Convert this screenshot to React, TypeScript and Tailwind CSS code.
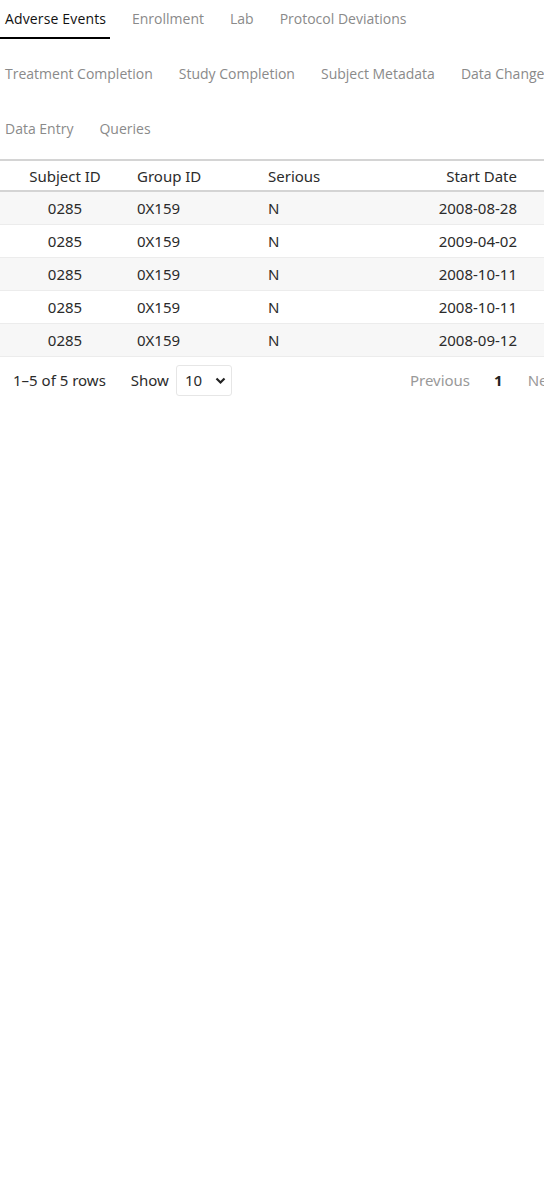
import React from 'react'

const tabRows = [
  ['Adverse Events', 'Enrollment', 'Lab', 'Protocol Deviations'],
  ['Treatment Completion', 'Study Completion', 'Subject Metadata', 'Data Changes'],
  ['Data Entry', 'Queries'],
]

const rows = [
  { subject: '0285', group: '0X159', serious: 'N', start: '2008-08-28' },
  { subject: '0285', group: '0X159', serious: 'N', start: '2009-04-02' },
  { subject: '0285', group: '0X159', serious: 'N', start: '2008-10-11' },
  { subject: '0285', group: '0X159', serious: 'N', start: '2008-10-11' },
  { subject: '0285', group: '0X159', serious: 'N', start: '2008-09-12' },
]

export default function App() {
  return (
    <div className="w-[544px] h-[1202px] overflow-hidden bg-white font-['Open_Sans',sans-serif]">
      {/* Tabs */}
      <div className="flex flex-col gap-4">
        {tabRows.map((row, ri) => (
          <div key={ri} className="flex gap-4 whitespace-nowrap">
            {row.map((t) => {
              const active = t === 'Adverse Events'
              return (
                <div
                  key={t}
                  className={
                    active
                      ? 'h-[39px] w-[110px] mr-[1px] px-[5px] flex items-center text-[14px] tracking-[0.15px] text-[#111] border-b-2 border-black'
                      : 'h-[39px] px-[5px] flex items-center text-[14px] text-[#8a8a8a] border-b-2 border-transparent'
                  }
                >
                  {t}
                </div>
              )
            })}
          </div>
        ))}
      </div>

      {/* Table */}
      <div className="mt-[10px] w-[620px] text-[15px] text-[#2b2b2b] font-['Noto_Sans',sans-serif]">
        <div className="flex h-[33px] pt-[1px] items-center border-t-2 border-b-2 border-[#d4d4d4]">
          <div className="w-[130px] text-center">Subject ID</div>
          <div className="w-[131px] px-[7px]">Group ID</div>
          <div className="w-[131px] px-[7px]">Serious</div>
          <div className="w-[132px] px-[7px] text-right">Start Date</div>
        </div>
        {rows.map((r, i) => (
          <div
            key={i}
            className={
              i % 2 === 0
                ? 'flex h-[33px] items-center bg-[#f7f7f7] border-b border-[#ececec]'
                : 'flex h-[33px] items-center bg-white border-b border-[#ececec]'
            }
          >
            <div className="w-[130px] text-center">{r.subject}</div>
            <div className="w-[131px] px-[7px]">{r.group}</div>
            <div className="w-[131px] px-[7px]">{r.serious}</div>
            <div className="w-[132px] px-[7px] text-right">{r.start}</div>
          </div>
        ))}
      </div>

      {/* Pagination */}
      <div className="flex items-center h-[31px] mt-[8px] w-[600px] text-[15px] text-[#2b2b2b] font-['Noto_Sans',sans-serif] whitespace-nowrap">
        <span className="ml-[13px]">1–5 of 5 rows</span>
        <span className="ml-[25px]">Show</span>
        <div className="ml-[7px] w-[56px] h-[31px] border border-[#e6e6e6] rounded-[3px] flex items-center justify-between pl-[8px] pr-[5px]">
          <span>10</span>
          <svg width="11" height="8" viewBox="0 0 11 8">
            <path d="M1.5 1.5 L5.5 5.5 L9.5 1.5" fill="none" stroke="#222" strokeWidth="2.2" />
          </svg>
        </div>
        <span className="ml-[178px] text-[#999]">Previous</span>
        <span className="ml-[24px] font-bold text-[#222]">1</span>
        <span className="ml-[25px] text-[#999]">Next</span>
      </div>
    </div>
  )
}
